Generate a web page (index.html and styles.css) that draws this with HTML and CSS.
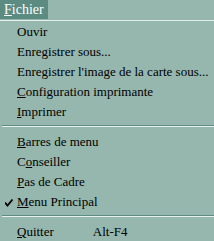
FILE: index.html
```html
<!DOCTYPE html>
<html>
<head>
<meta charset="utf-8">
<link rel="stylesheet" href="styles.css">
</head>
<body>
<div class="menubar"><span class="title"><u>F</u>ichier</span></div>
<div class="popup">
  <div class="item">Ouvir</div>
  <div class="item">Enregistrer sous...</div>
  <div class="item">Enregistrer l'image de la carte sous...</div>
  <div class="item"><u>C</u>onfiguration imprimante</div>
  <div class="item"><u>I</u>mprimer</div>
  <div class="sep"></div>
  <div class="item"><u>B</u>arres de menu</div>
  <div class="item">C<u>o</u>nseiller</div>
  <div class="item"><u>P</u>as de Cadre</div>
  <div class="item checked"><svg class="check" width="8" height="8" viewBox="0 0 8 8"><path d="M0 3.5 L2.5 6.5 L7.5 0.5" fill="none" stroke="#000" stroke-width="1.8"/></svg><u>M</u>enu Principal</div>
  <div class="sep"></div>
  <div class="item"><u>Q</u>uitter<span class="accel">Alt-F4</span></div>
</div>
</body>
</html>
```
FILE: styles.css
```css
html, body {
  margin: 0;
  padding: 0;
}
body {
  width: 214px;
  height: 241px;
  overflow: hidden;
  background: #95b7ae;
  font-family: "Liberation Serif", "Times New Roman", serif;
  font-size: 13px;
  color: #000;
}
.menubar {
  height: 20px;
  display: flex;
}
.title {
  width: 44px;
  height: 19px;
  padding-left: 4px;
  background: #5b8b81;
  color: #fff;
  font-size: 14px;
  line-height: 19px;
}
.popup {
  border-top: 1px solid #e4eeeb;
  padding-top: 1px;
  display: flex;
  flex-direction: column;
}
.item {
  height: 20px;
  line-height: 20px;
  padding-left: 17px;
  position: relative;
  white-space: nowrap;
}
.check {
  position: absolute;
  left: 5px;
  top: 7px;
}
.accel {
  margin-left: 39px;
}
.sep {
  height: 10px;
  margin-left: 2px;
  box-sizing: border-box;
  padding-top: 3px;
}
.sep::before {
  content: "";
  display: block;
  height: 1px;
  background: #5f8c83;
  border-bottom: 1px solid #e8f0ee;
}
```
